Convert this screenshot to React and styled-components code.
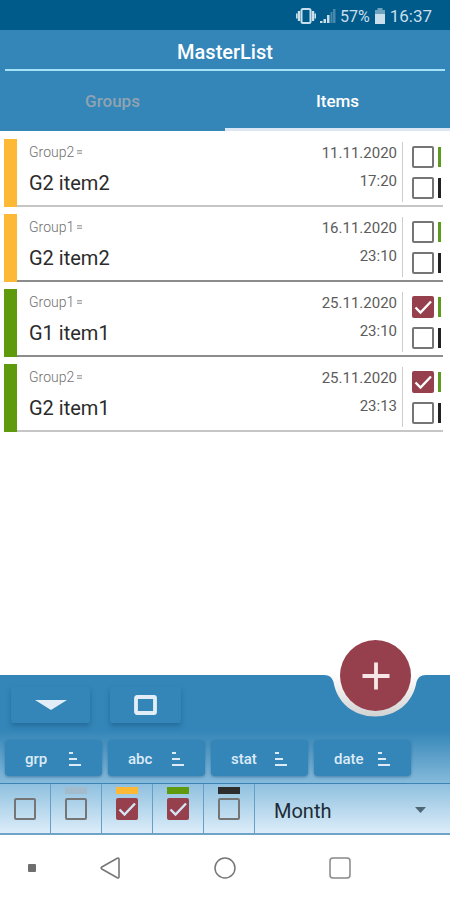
import { useState } from "react"
import styled, { createGlobalStyle, css } from "styled-components"

const GlobalStyle = createGlobalStyle`
    * {
        box-sizing: border-box;
    }
    body {
        margin: 0;
        background-color: #ffffff;
        font-family: Roboto, "Liberation Sans", sans-serif;
    }
    button, select, input {
        font-family: inherit;
        margin: 0;
    }
`

const Screen = styled.div`
    min-height: 100vh;
    display: flex;
    flex-direction: column;
`

const StatusBar = styled.div`
    height: 30px;
    padding: 2px 18px 0 0;
    display: flex;
    justify-content: flex-end;
    align-items: center;
    gap: 4px;
    background-color: #005b8a;
    color: #c9dfec;
    font-size: 16px;
`

const Clock = styled.span`
    font-size: 17px;
`

const Header = styled.header`
    background-color: #3486b8;
    color: #ffffff;
`

const Title = styled.h1`
    margin: 0 5px;
    height: 41px;
    padding-top: 4px;
    border-bottom: 2px solid #a4e2f8;
    display: flex;
    justify-content: center;
    align-items: center;
    font-size: 20px;
    font-weight: 500;
`

const Tabs = styled.nav`
    display: grid;
    grid-template-columns: 1fr 1fr;
`

const Tab = styled.button`
    height: 60px;
    padding: 2px 0 0;
    border: none;
    border-bottom: 3px solid ${props => props.$active ? "#dce6f2" : "transparent"};
    background-color: transparent;
    color: ${props => props.$active ? "#ffffff" : "#8fa3b1"};
    font-size: 17px;
    font-weight: 500;
    cursor: pointer;
`

const List = styled.ul`
    flex: 1;
    margin: 0;
    padding: 8px 7px 8px 4px;
    list-style: none;
    display: flex;
    flex-direction: column;
    gap: 7px;
`

const Row = styled.li`
    height: 68px;
    display: flex;
`

const Stripe = styled.div`
    width: 13px;
    background-color: ${props => props.$color};
`

const RowBody = styled.div`
    flex: 1;
    display: flex;
    padding-left: 12px;
    border-bottom: 2px solid ${props => props.$line};
`

const Names = styled.div`
    flex: 1;
    padding-top: 4px;
`

const GroupName = styled.div`
    display: flex;
    align-items: center;
    gap: 3px;
    color: #6f6f6f;
    font-size: 14px;
    font-weight: 300;
    line-height: 18px;
`

const ItemName = styled.div`
    margin-top: 9px;
    color: #2b2b2b;
    font-size: 20px;
    line-height: 26px;
`

const When = styled.div`
    padding: 5px 5px 0 0;
    display: flex;
    flex-direction: column;
    gap: 10px;
    text-align: right;
    color: #5c5c5c;
    font-size: 15px;
    line-height: 18px;
`

const Checks = styled.div`
    margin: 3px 0;
    padding: 4px 2px 0 9px;
    border-left: 1px solid #cccccc;
    display: flex;
    flex-direction: column;
    gap: 9px;
`

const CheckLine = styled.div`
    display: flex;
    align-items: center;
    gap: 4px;
`

const Mark = styled.span`
    width: 3px;
    height: 20px;
    background-color: ${props => props.$color};
`

const CheckWrap = styled.label`
    position: relative;
    display: block;
    width: 22px;
    height: 22px;
`

const CheckInput = styled.input`
    appearance: none;
    display: block;
    width: 22px;
    height: 22px;
    border: 2px solid #757575;
    border-radius: 2px;
    cursor: pointer;

    &:checked {
        border-color: #96404d;
        background-color: #96404d;
    }
    & + svg {
        display: none;
    }
    &:checked + svg {
        display: block;
    }
`

const Tick = styled.svg`
    position: absolute;
    top: 0;
    left: 0;
    pointer-events: none;
`

const Panel = styled.section`
    position: relative;
    padding: 12px 5px 7px;
    display: flex;
    flex-direction: column;
    gap: 17px;
    background: linear-gradient(#3486b8 0, #3486b8 56px, #86badb 100%);
`

const Notch = styled.svg`
    position: absolute;
    top: -1px;
    right: 21px;
    pointer-events: none;
`

const AddButton = styled.button`
    position: absolute;
    top: -35px;
    right: 39px;
    width: 71px;
    height: 71px;
    padding: 0;
    border: none;
    border-radius: 50%;
    background-color: #96404d;
    display: flex;
    justify-content: center;
    align-items: center;
    cursor: pointer;
`

const ButtonRow = styled.div`
    display: flex;
    gap: ${props => props.$gap};
    padding-left: ${props => props.$indent || "0"};
`

const panelButton = css`
    height: 36px;
    padding: 0;
    border: none;
    border-radius: 4px;
    background-color: #3486b8;
    color: #dcebf7;
    display: flex;
    align-items: center;
    cursor: pointer;
`

const IconButton = styled.button`
    ${panelButton}
    width: ${props => props.$wide ? "79px" : "71px"};
    justify-content: center;
    border-radius: 2px;
    box-shadow: 0 3px 5px rgba(10, 70, 115, 0.4);
`

const SortButton = styled.button`
    ${panelButton}
    width: 97px;
    padding: 1px 21px 0 20px;
    justify-content: space-between;
    box-shadow: 0 1px 3px rgba(20, 80, 125, 0.5);
    font-size: 15px;
    font-weight: 500;
`

const FilterBar = styled.section`
    height: 52px;
    display: flex;
    border-top: 1px solid #3b84b5;
    border-bottom: 2px solid #6fa3c8;
    background: linear-gradient(#8fc0df, #dcedf9);
`

const FilterCell = styled.div`
    width: 51px;
    padding-top: 3px;
    border-right: 1px solid #659fc8;
    display: flex;
    flex-direction: column;
    align-items: center;
    gap: 4px;
`

const Tag = styled.span`
    width: 22px;
    height: 7px;
    background-color: ${props => props.$color};
`

const SelectWrap = styled.div`
    position: relative;
    flex: 1;
    display: flex;
`

const Period = styled.select`
    appearance: none;
    flex: 1;
    padding: 4px 20px 0 19px;
    border: none;
    background-color: transparent;
    color: #1d2c36;
    font-size: 20px;
`

const Arrow = styled.svg`
    position: absolute;
    top: 23px;
    right: 24px;
    pointer-events: none;
`

const NavBar = styled.nav`
    height: 65px;
    display: grid;
    grid-template-columns: 52px 1fr 1fr 1fr 52px;
    background-color: #ffffff;
`

const NavButton = styled.button`
    padding: ${props => props.$first ? "0 0 0 12px" : "0"};
    border: none;
    background-color: transparent;
    display: flex;
    justify-content: center;
    align-items: center;
    cursor: pointer;
`

const items = [
    { id: 1, group: "Group2", name: "G2 item2", date: "11.11.2020", time: "17:20", color: "#fdb935", line: "#c6c6c6", done: false },
    { id: 2, group: "Group1", name: "G2 item2", date: "16.11.2020", time: "23:10", color: "#fdb935", line: "#8c8c8c", done: false },
    { id: 3, group: "Group1", name: "G1 item1", date: "25.11.2020", time: "23:10", color: "#5f9a0c", line: "#8c8c8c", done: true },
    { id: 4, group: "Group2", name: "G2 item1", date: "25.11.2020", time: "23:13", color: "#5f9a0c", line: "#c6c6c6", done: true },
]

const filters = [
    { label: "All", color: "transparent", checked: false },
    { label: "Grey", color: "#a3bccd", checked: false },
    { label: "Yellow", color: "#fdb935", checked: true },
    { label: "Green", color: "#5f9a0c", checked: true },
    { label: "Black", color: "#2d2d2d", checked: false },
]

const Check = ({label, checked, tick = "#ffffff"}) => (
    <CheckWrap>
        <CheckInput type="checkbox" aria-label={label} defaultChecked={checked} />
        <Tick width="22" height="22" viewBox="0 0 22 22" fill="none">
            <path d="M3.5 11.5L8.5 16.5L19 5.5" stroke={tick} strokeWidth="2.4" />
        </Tick>
    </CheckWrap>
)

const SortIcon = () => (
    <svg width="12" height="16" viewBox="0 0 12 16" fill="currentColor">
        <path d="M0 1H4V3H0zM0 7H8V9H0zM0 13H12V15H0z" />
    </svg>
)

const PhoneStatus = () => (
    <StatusBar>
        <svg width="20" height="16" viewBox="0 0 20 16" fill="none" stroke="currentColor">
            <rect x="5.5" y="1" width="9" height="14" rx="1.5" strokeWidth="2" />
            <path d="M3 3V13M17 3V13" strokeWidth="2.4" />
            <path d="M.8 5.5V10.5M19.2 5.5V10.5" strokeWidth="1.600" />
        </svg>
        <svg width="16" height="16" viewBox="0 0 16 16" fill="currentColor">
            <path d="M0 13H2.500V15H0zM3.500 11H6V15H3.500zM7 7H9.500V15H7z" />
            <path d="M10.500 4H12.500V15H10.500zM13 1H15.500V15H13z" opacity=".35" />
        </svg>
        <span>57%</span>
        <svg width="12" height="16" viewBox="0 0 12 16" fill="currentColor">
            <path d="M3.5 0H8.5V2H11V6H1V2H3.5z" opacity=".55" />
            <path d="M1 6H11V16H1z" />
        </svg>
        <Clock>16:37</Clock>
    </StatusBar>
)

const ItemRow = ({item}) => (
    <Row>
        <Stripe $color={item.color} />
        <RowBody $line={item.line}>
            <Names>
                <GroupName>
                    {item.group}
                    <svg width="5" height="6" viewBox="0 0 5 6" fill="#dddddd" stroke="#aaaaaa">
                        <path d="M0 1.500H5V4.500H0z" stroke="none" />
                        <path d="M0 1.500H5M0 4.500H5" />
                    </svg>
                </GroupName>
                <ItemName>{item.name}</ItemName>
            </Names>
            <When>
                <span>{item.date}</span>
                <span>{item.time}</span>
            </When>
            <Checks>
                <CheckLine>
                    <Check label={`${item.name} green`} checked={item.done} />
                    <Mark $color="#5f9a20" />
                </CheckLine>
                <CheckLine>
                    <Check label={`${item.name} black`} checked={false} />
                    <Mark $color="#222222" />
                </CheckLine>
            </Checks>
        </RowBody>
    </Row>
)

const App = () => {

    const [tab, setTab] = useState("Items")

    return(
        <Screen>
            <GlobalStyle />
            <PhoneStatus />
            <Header>
                <Title>MasterList</Title>
                <Tabs>
                    {["Groups", "Items"].map(name => (
                        <Tab key={name} $active={tab === name} onClick={() => setTab(name)}>{name}</Tab>
                    ))}
                </Tabs>
            </Header>
            <List>
                {items.map(item => <ItemRow key={item.id} item={item} />)}
            </List>
            <Panel>
                <ButtonRow $gap="20px" $indent="6px">
                    <IconButton $wide aria-label="Collapse">
                        <svg width="32" height="10" viewBox="0 0 32 10" fill="#e3edf8">
                            <path d="M0 0H32L16 10z" />
                        </svg>
                    </IconButton>
                    <IconButton aria-label="Select">
                        <svg width="23" height="20" viewBox="0 0 23 20" fill="none" stroke="#e3edf8" strokeWidth="3.8">
                            <rect x="2" y="2" width="19" height="16" rx="1" />
                        </svg>
                    </IconButton>
                </ButtonRow>
                <ButtonRow $gap="6px">
                    {["grp", "abc", "stat", "date"].map(name => (
                        <SortButton key={name}>{name}<SortIcon /></SortButton>
                    ))}
                </ButtonRow>
                <Notch width="108" height="46" viewBox="0 0 108 46">
                    <defs>
                        <linearGradient id="notch" x1="0" y1="0" x2="0" y2="1">
                            <stop offset="0" stopColor="#ffffff" />
                            <stop offset="1" stopColor="#d2d2d2" />
                        </linearGradient>
                    </defs>
                    <path d="M3 0V1C9 1 11 4 12.500 8C16 29 33 42.500 54 42.500C75 42.500 92 29 95.500 8C97 4 99 1 105 1V0z" fill="url(#notch)" />
                </Notch>
                <AddButton aria-label="Add item">
                    <svg width="28" height="28" viewBox="0 0 28 28" stroke="#f7e6e8" strokeWidth="3.8">
                        <path d="M14 0.500V27.500M0.500 14H27.500" />
                    </svg>
                </AddButton>
            </Panel>
            <FilterBar>
                {filters.map(filter => (
                    <FilterCell key={filter.label}>
                        <Tag $color={filter.color} />
                        <Check label={filter.label} checked={filter.checked} tick="#d5e6f6" />
                    </FilterCell>
                ))}
                <SelectWrap>
                    <Period aria-label="Period" defaultValue="Month">
                        <option>Month</option>
                    </Period>
                    <Arrow width="11" height="6" viewBox="0 0 11 6" fill="#4f6675">
                        <path d="M0 0H11L5.500 6z" />
                    </Arrow>
                </SelectWrap>
            </FilterBar>
            <NavBar>
                <NavButton $first aria-label="Menu">
                    <svg width="8" height="8" viewBox="0 0 8 8">
                        <rect width="8" height="8" rx="1" fill="#6e6e6e" />
                    </svg>
                </NavButton>
                <NavButton aria-label="Back">
                    <svg width="20" height="22" viewBox="0 0 20 22" fill="none" stroke="#777777" strokeWidth="1.6" strokeLinejoin="round">
                        <path d="M17.300 1.200Q19 .600 19 2.500V19.500Q19 21.400 17.300 20.800L1.800 12Q.400 11 1.800 10z" />
                    </svg>
                </NavButton>
                <NavButton aria-label="Home">
                    <svg width="22" height="22" viewBox="0 0 22 22" fill="none" stroke="#777777" strokeWidth="1.500">
                        <circle cx="11" cy="11" r="10" />
                    </svg>
                </NavButton>
                <NavButton aria-label="Recent">
                    <svg width="22" height="22" viewBox="0 0 22 22" fill="none" stroke="#888888" strokeWidth="1.500">
                        <rect x="1" y="1" width="20" height="20" rx="3" />
                    </svg>
                </NavButton>
            </NavBar>
        </Screen>
    )
}

export default App
